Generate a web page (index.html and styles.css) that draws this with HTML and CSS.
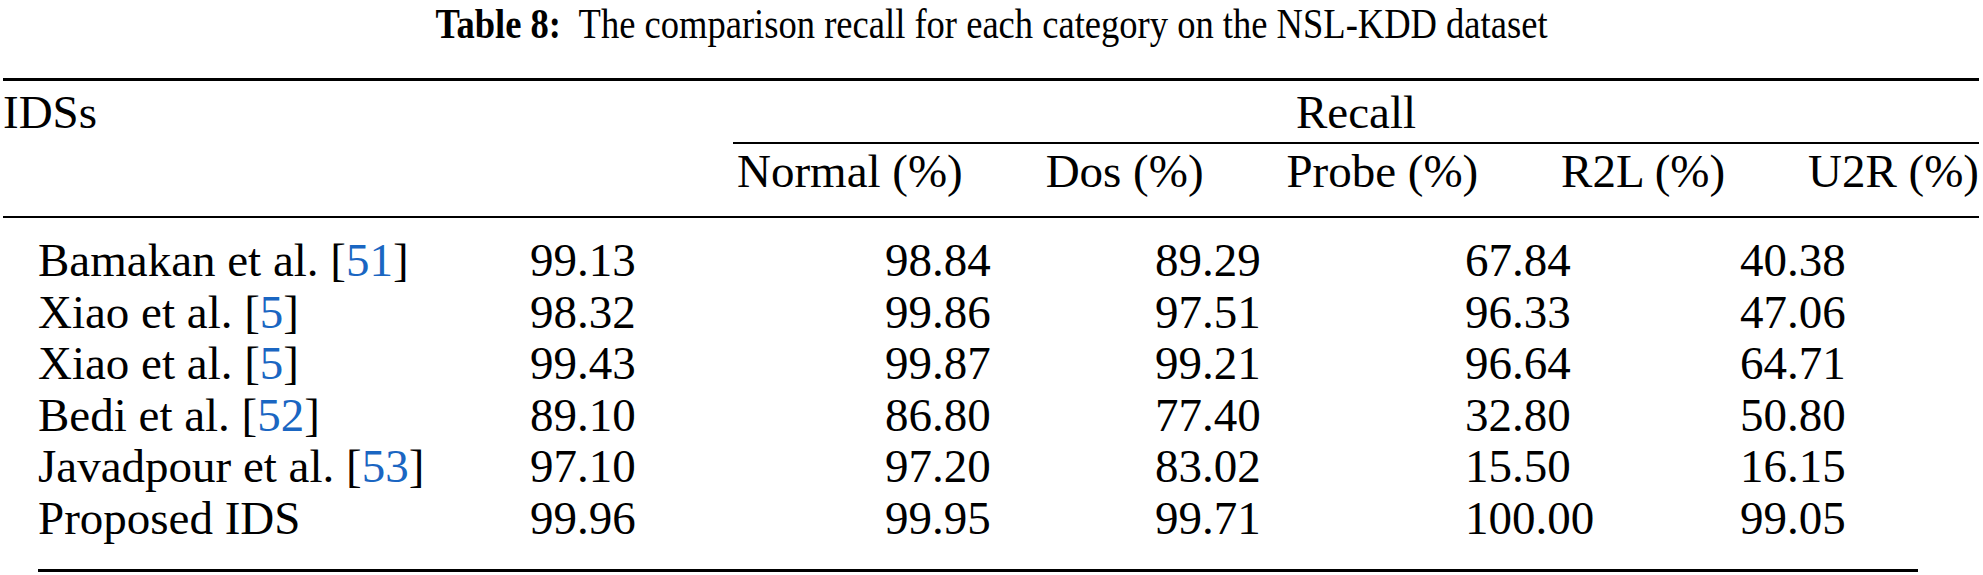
FILE: index.html
```html
<!DOCTYPE html>
<html lang="en">
<head>
  <meta charset="UTF-8" />
  <title>Table 8</title>
  <link rel="stylesheet" href="styles.css">
</head>
<body>
  <div class="caption"><span class="label">Table 8:</span>&nbsp; The comparison recall for each category on the NSL-KDD dataset</div>

  <div class="tbl">
    <div class="thead">
      <div class="ids">IDSs</div>
      <div class="group">Recall</div>
      <div class="cols">
        <span>Normal (%)</span>
        <span>Dos (%)</span>
        <span>Probe (%)</span>
        <span>R2L (%)</span>
        <span>U2R (%)</span>
      </div>
    </div>

    <div class="tbody">
      <div class="row">
        <span>Bamakan et al. [<a class="cite" href="#r51">51</a>]</span>
        <span>99.13</span><span>98.84</span><span>89.29</span><span>67.84</span><span>40.38</span>
      </div>
      <div class="row">
        <span>Xiao et al. [<a class="cite" href="#r5">5</a>]</span>
        <span>98.32</span><span>99.86</span><span>97.51</span><span>96.33</span><span>47.06</span>
      </div>
      <div class="row">
        <span>Xiao et al. [<a class="cite" href="#r5">5</a>]</span>
        <span>99.43</span><span>99.87</span><span>99.21</span><span>96.64</span><span>64.71</span>
      </div>
      <div class="row">
        <span>Bedi et al. [<a class="cite" href="#r52">52</a>]</span>
        <span>89.10</span><span>86.80</span><span>77.40</span><span>32.80</span><span>50.80</span>
      </div>
      <div class="row">
        <span>Javadpour et al. [<a class="cite" href="#r53">53</a>]</span>
        <span>97.10</span><span>97.20</span><span>83.02</span><span>15.50</span><span>16.15</span>
      </div>
      <div class="row">
        <span>Proposed IDS</span>
        <span>99.96</span><span>99.95</span><span>99.71</span><span>100.00</span><span>99.05</span>
      </div>
    </div>
  </div>
</body>
</html>
```

FILE: styles.css
```css
html, body {
  margin: 0; padding: 0;
  background: #fff;
  color: #000;
}
* { box-sizing: border-box; }

.caption, .tbl {
  font-family: "Liberation Serif", "DejaVu Serif", serif;
}

.caption {
  text-align: center;
  font-size: 42px;
  line-height: 40px;
  padding: 4px 0 34px;
  white-space: nowrap;
  transform: scaleX(0.87);
}
.caption .label { font-weight: bold; }

.tbl {
  margin: 0 4px 0 3px;
  font-size: 47px;
  line-height: 51px;
}

/* header: booktabs style rules */
.thead {
  display: grid;
  grid-template-columns: 730px 1fr;
  border-top: 3px solid #000;
  border-bottom: 2px solid #000;
  padding: 6px 0 19px;
}
.ids { grid-column: 1; grid-row: 1; }
.group {
  grid-column: 2;
  grid-row: 1;
  text-align: center;
  padding-bottom: 4px;
  border-bottom: 2px solid #000;
}
.cols {
  grid-column: 2;
  grid-row: 2;
  display: flex;
  justify-content: space-between;
  padding: 2px 0 0 4px;
  white-space: nowrap;
}

.tbody {
  margin: 0 61px 0 35px;
  padding: 17px 0 25px;
  border-bottom: 3px solid #000;
}
.row {
  display: grid;
  grid-template-columns: 492px 355px 270px 310px 275px 1fr;
  line-height: 51.5px;
  white-space: nowrap;
}

.cite {
  color: #1a66c2;
  text-decoration: none;
}
```
